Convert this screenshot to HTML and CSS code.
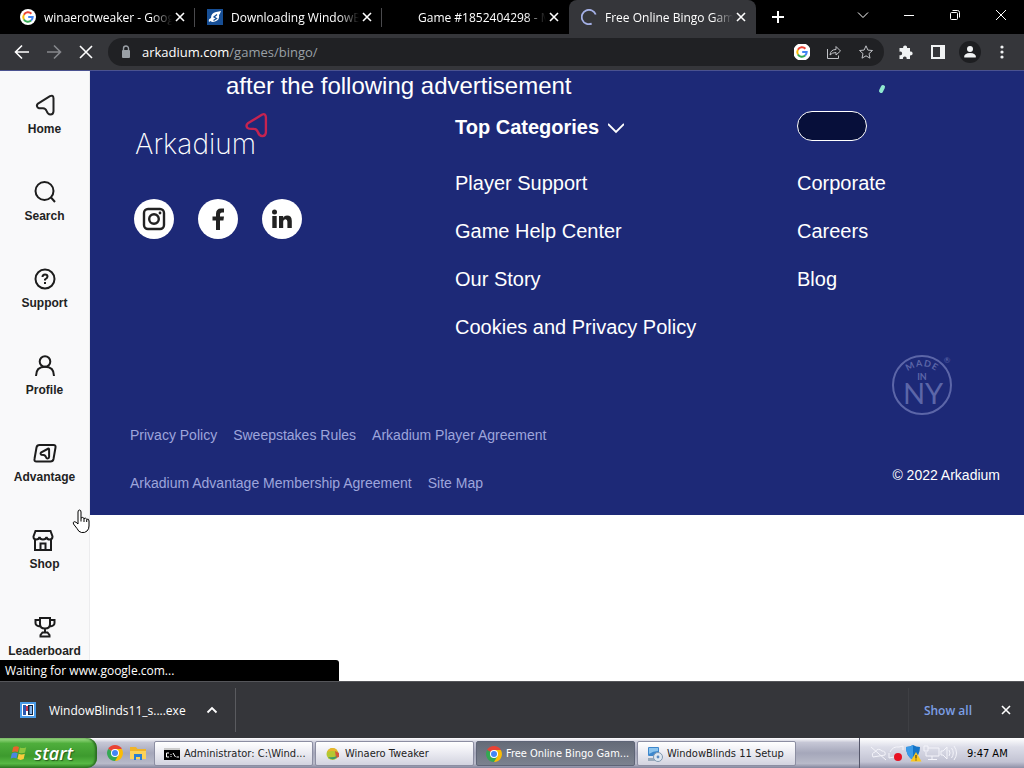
FILE: index.html
```html
<!DOCTYPE html>
<html lang="en">
<head>
    <meta charset="UTF-8">
    <meta name="viewport" content="width=device-width, initial-scale=1.0">
    <title>Free Online Bingo Game</title>
    <link rel="stylesheet" href="styles.css">
</head>
<body>
    <!-- Shared icons -->
    <svg class="sprite" width="0" height="0" aria-hidden="true">
        <symbol id="close" viewBox="0 0 16 16">
            <path d="M4 4l8 8M12 4l-8 8" fill="none" stroke="currentColor" stroke-width="1.6"/>
        </symbol>
        <symbol id="google" viewBox="0 0 16 16">
            <circle cx="8" cy="8" r="8" fill="#fff"/>
            <g fill="none" stroke-width="2">
                <path d="M11.4 4.7A4.7 4.7 0 0 0 3.9 5.7" stroke="#ea4335"/>
                <path d="M3.9 5.7a4.7 4.7 0 0 0 0 4.7" stroke="#fbbc05"/>
                <path d="M3.9 10.4a4.7 4.7 0 0 0 7.2 1.1" stroke="#34a853"/>
                <path d="M11.1 11.5A4.7 4.7 0 0 0 12.7 8H8.2" stroke="#4285f4"/>
            </g>
        </symbol>
        <symbol id="chrome" viewBox="0 0 16 16">
            <path d="M8 8L1.1 4A8 8 0 0 1 14.9 4z" fill="#ea4335"/>
            <path d="M8 8L14.9 4A8 8 0 0 1 8 16z" fill="#fbbc05"/>
            <path d="M8 8v8A8 8 0 0 1 1.1 4z" fill="#34a853"/>
            <path d="M8 4h6.9l-3.4 6z" fill="#fbbc05"/>
            <path d="M11.5 10L8 16 4.5 10z" fill="#34a853"/>
            <circle cx="8" cy="8" r="4" fill="#fff"/>
            <circle cx="8" cy="8" r="3" fill="#4285f4"/>
        </symbol>
        <symbol id="arrow-mark" viewBox="0 0 24 24">
            <path d="M17 3.2L5 10.6Q3 12.4 4.6 14.4Q6 15.6 10 15.3Q12.6 15.4 13.6 18Q14.8 21.4 17.4 21.6Q20.4 21.4 20.5 18.2V5.4Q20.3 1.6 17 3.2z" fill="none" stroke="currentColor" stroke-linejoin="round"/>
        </symbol>
    </svg>

    <header class="browser">
        <div class="tab-strip">
            <div class="tab">
                <svg class="favicon"><use href="#google"/></svg>
                <span class="tab-title">winaerotweaker - Goog</span>
                <button class="tab-close" aria-label="Close tab"><svg><use href="#close"/></svg></button>
            </div>
            <div class="tab">
                <svg class="favicon" viewBox="0 0 16 16">
                    <rect width="16" height="16" fill="#174f96"/>
                    <path d="M2 13q-1-3 2-4 0-5 5-6 3-.6 5-1-1 3-2 4 1 5-4 6.5-3 1-4.5-.5z" fill="#fff"/>
                    <path d="M6.5 11.5l3-2L7 8l3-2.5" fill="none" stroke="#174f96" stroke-width="1.3"/>
                </svg>
                <span class="tab-title">Downloading WindowB</span>
                <button class="tab-close" aria-label="Close tab"><svg><use href="#close"/></svg></button>
            </div>
            <div class="tab">
                <span class="favicon"></span>
                <span class="tab-title">Game #1852404298 - M</span>
                <button class="tab-close" aria-label="Close tab"><svg><use href="#close"/></svg></button>
            </div>
            <div class="tab active">
                <svg class="favicon" viewBox="0 0 16 16">
                    <path d="M14.7 5.5A7.2 7.2 0 1 0 10.7 14.7" fill="none" stroke="#a4b0e6" stroke-width="1.8"/>
                </svg>
                <span class="tab-title">Free Online Bingo Gam</span>
                <button class="tab-close" aria-label="Close tab"><svg><use href="#close"/></svg></button>
            </div>
            <button class="new-tab" aria-label="New tab">
                <svg viewBox="0 0 16 16"><path d="M8 2v12M2 8h12" stroke="currentColor" stroke-width="2"/></svg>
            </button>
            <div class="window-controls">
                <button aria-label="Search tabs"><svg viewBox="0 0 16 16"><path d="M3 5.5l5 5 5-5"/></svg></button>
                <button aria-label="Minimize"><svg viewBox="0 0 16 16"><path d="M3 8.5h10"/></svg></button>
                <button aria-label="Restore"><svg viewBox="0 0 16 16"><rect x="3.5" y="5.5" width="7" height="7" rx="1"/><path d="M5.5 3.500h5q2 0 2 2v5"/></svg></button>
                <button aria-label="Close window"><svg viewBox="0 0 16 16"><path d="M3 3l10 10M13 3L3 13"/></svg></button>
            </div>
        </div>

        <div class="toolbar">
            <button class="tool" aria-label="Back"><svg viewBox="0 0 16 16"><path d="M15 8H2M8 1.5L1.5 8 8 14.5"/></svg></button>
            <button class="tool dim" aria-label="Forward"><svg viewBox="0 0 16 16"><path d="M1 8h13M8 1.5L14.5 8 8 14.5"/></svg></button>
            <button class="tool" aria-label="Stop"><svg viewBox="0 0 16 16"><path d="M2 2l12 12M14 2L2 14"/></svg></button>
            <div class="omnibox">
                <svg class="lock" viewBox="0 0 16 16">
                    <rect x="4" y="6" width="8" height="8" rx="1" fill="#9aa0a6"/>
                    <path d="M5.5 6.5v-2a2.5 2.5 0 0 1 5 0v2" fill="none" stroke="#9aa0a6" stroke-width="1.4"/>
                </svg>
                <span class="url">arkadium.com<span>/games/bingo/</span></span>
                <button class="tool" aria-label="Search with Google"><svg><use href="#google"/></svg></button>
                <button class="tool thin" aria-label="Share"><svg viewBox="0 0 16 16"><path d="M1.5 5v9.5h11v-3M4 11q.5-5.5 6-5.5V2.5L14.5 7 10 11V8.5Q6 8.5 4 11z"/></svg></button>
                <button class="tool thin" aria-label="Bookmark"><svg viewBox="0 0 16 16"><path d="M8 1.8l1.9 4.3 4.6.4-3.5 3.1 1 4.6L8 11.8l-4 2.4 1-4.6L1.5 6.5l4.6-.4z"/></svg></button>
            </div>
            <button class="tool solid" aria-label="Extensions"><svg viewBox="0 0 16 16"><path d="M1.5 4h3.700a2 2 0 1 1 3.800 0H12v3.500a2 2 0 1 1 0 3.800V15H8.600a1.900 1.900 0 1 0-3.600 0H1.500v-3.800a1.900 1.900 0 1 0 0-3.500z"/></svg></button>
            <button class="tool solid" aria-label="Side panel"><svg viewBox="0 0 16 16"><path d="M1 1h14v14H1zM3 3v10h7V3z" fill-rule="evenodd"/></svg></button>
            <button class="tool solid avatar" aria-label="Profile"><svg viewBox="0 0 16 16"><circle cx="8" cy="5" r="3"/><path d="M2 13.500q0-4.500 6-4.500t6 4.500z"/></svg></button>
            <button class="tool solid" aria-label="Menu"><svg viewBox="0 0 16 16"><circle cx="8" cy="3" r="1.6"/><circle cx="8" cy="8" r="1.6"/><circle cx="8" cy="13" r="1.6"/></svg></button>
        </div>
    </header>

    <div class="page">
        <nav class="sidebar">
            <a href="#"><svg viewBox="0 0 24 24"><use href="#arrow-mark"/></svg>Home</a>
            <a href="#"><svg viewBox="0 0 24 24"><circle cx="11.5" cy="11" r="9"/><path d="M18 17.5l4 4.5"/></svg>Search</a>
            <a href="#"><svg viewBox="0 0 24 24"><circle cx="12" cy="12" r="9.500"/><path d="M9.500 10q0-2.500 2.500-2.500t2.500 2.200q0 1.300-2.500 2.800v1M12 15v2"/></svg>Support</a>
            <a href="#"><svg viewBox="0 0 24 24"><circle cx="12" cy="7.5" r="5.3"/><path d="M3 22q0-9.200 9-9.200T21 22"/></svg>Profile</a>
            <a href="#"><svg viewBox="0 0 24 24"><path d="M6.500 4h14q2.500 0 2 2.500l-2 11.500q-.5 2.500-3 2.500h-14Q1 20.500 1.500 18l2-11.500Q4 4 6.500 4zM15.500 7.500L8.300 11.300q-1.500 1.200 0 2.400 3.700.1 4.300 1.600.8 2.200 2 2.200 1.400-.2 1.500-1.500V8.500q0-1-.6-1z"/></svg>Advantage</a>
            <a href="#"><svg viewBox="0 0 24 24"><path d="M2.500 3h15l2 5.500q0 3-2.800 3T13.500 9q-.5 2.500-3.500 2.500T6.500 9q-.5 2.500-3.300 2.500T.5 8.500zM2 11.500V22h16V11.500M7.500 22v-6.500h5V22"/></svg>Shop</a>
            <a href="#"><svg viewBox="0 0 24 24"><path d="M7 3h10v6q0 4.500-5 4.500T7 9zM7 5H2.500v3q0 3 5 3.500M17 5h4.500v3q0 3-5 3.500M12 13.500v4M9.500 17.500h5l2 2.500v1.500h-9V20z"/></svg>Leaderboard</a>
        </nav>

        <main class="content">
            <footer class="site-footer">
                <p class="ad-notice">after the following advertisement</p>
                <div class="footer-columns">
                    <div class="brand">
                        <a class="logo" href="#">Arkadium<svg class="logo-mark"><use href="#arrow-mark"/></svg></a>
                        <div class="social">
                            <a href="#" aria-label="Instagram"><svg viewBox="0 0 24 24"><rect x="2" y="2" width="20" height="20" rx="4" fill="none" stroke="#222" stroke-width="2.4"/><circle cx="12" cy="12" r="4.8" fill="none" stroke="#222" stroke-width="2.4"/><circle cx="18" cy="6" r="1.4"/></svg></a>
                            <a href="#" aria-label="Facebook"><svg viewBox="0 0 24 24"><path d="M10 23V13.500H6.500v-4H10V7q0-5.500 5-5.500h3v4h-2q-2 0-2 2v2h4l-.6 4H14V23z"/></svg></a>
                            <a href="#" aria-label="LinkedIn"><svg viewBox="0 0 24 24"><circle cx="4.5" cy="5" r="2.5"/><path d="M2.300 9h4.400v12H2.300zM9 9h4.200v1.700Q14.400 8.600 17 8.600q4.800 0 4.800 5.400v7h-4.400v-6.300q0-2.500-2-2.500-2.200 0-2.200 2.500V21H9z"/></svg></a>
                        </div>
                    </div>
                    <div class="link-column">
                        <h2>Top Categories <svg viewBox="0 0 16 16"><path d="M0 5l8 8 8-8" fill="none" stroke="currentColor" stroke-width="1.8"/></svg></h2>
                        <a href="#">Player Support</a>
                        <a href="#">Game Help Center</a>
                        <a href="#">Our Story</a>
                        <a href="#">Cookies and Privacy Policy</a>
                    </div>
                    <div class="link-column">
                        <div class="pill-row"><button class="pill" aria-label="Language"></button></div>
                        <a href="#">Corporate</a>
                        <a href="#">Careers</a>
                        <a href="#">Blog</a>
                    </div>
                </div>
                <div class="footer-bottom">
                    <div class="legal">
                        <a href="#">Privacy Policy</a>
                        <a href="#">Sweepstakes Rules</a>
                        <a href="#">Arkadium Player Agreement</a>
                        <a href="#">Arkadium Advantage Membership Agreement</a>
                        <a href="#">Site Map</a>
                    </div>
                    <div class="copyright">
                        <svg class="badge" viewBox="2 0 64 64">
                            <circle cx="32" cy="34" r="29" fill="none" stroke="currentColor" stroke-width="2"/>
                            <path id="made-arc" d="M12 27a23 23 0 0 1 40 0" fill="none"/>
                            <text class="made"><textPath href="#made-arc" startOffset="50%">MADE</textPath></text>
                            <text class="in" x="32" y="29">IN</text>
                            <text class="ny" x="33" y="53">NY</text>
                            <text class="reg" x="57" y="12">®</text>
                        </svg>
                        <span>© 2022 Arkadium</span>
                    </div>
                </div>
                <svg class="spark" viewBox="0 0 8 10"><path d="M3 7l2-4" stroke="#8fe8d0" stroke-width="4" stroke-linecap="round"/></svg>
            </footer>
        </main>

        <svg class="cursor" viewBox="0 0 18 25">
            <path d="M6 15V3q0-2 1.500-2T9 3v6q2-1.500 3 .5 1.800-1 2.700.7 2.300-.7 2.300 1.800v5q0 3-2 5-2 2-5.500 1.500-3-.5-4.500-4L1.500 15q-.8-2 .7-2.300Q4 12.600 6 15zM9 9v3.500M12 9.500V13M14.700 10.500V13" fill="#fff" stroke="#000"/>
        </svg>
        <div class="status">Waiting for www.google.com...</div>
    </div>

    <div class="downloads">
        <button class="download-item">
            <svg class="file-icon" viewBox="0 0 16 16">
                <rect width="16" height="16" fill="#4a9be8"/>
                <rect x="2" y="2" width="12" height="12" fill="#fff"/>
                <path d="M3 3h3v10H3z" fill="#2c58b0"/>
                <path d="M6 4h2v5H6z" fill="#c8344c"/>
                <path d="M8 3h5v10H8z" fill="#10233f"/>
                <path d="M9.500 4h2.500v8H9.500z" fill="#7fb2ec"/>
            </svg>
            <span>WindowBlinds11_s....exe</span>
            <svg class="caret" viewBox="0 0 16 16"><path d="M3.500 10.500L8 6l4.500 4.500" fill="none" stroke="currentColor" stroke-width="1.800"/></svg>
        </button>
        <button class="show-all">Show all</button>
        <button class="close-bar" aria-label="Close downloads bar"><svg><use href="#close"/></svg></button>
    </div>

    <div class="taskbar">
        <button class="start">
            <svg viewBox="0 0 20 20">
                <path d="M3.500 3.500q3-2 6.500-.3L8.800 9q-3.300-1.500-6.500.2z" fill="#e8642c"/>
                <path d="M11 3.800q3.300 1.500 7-.3l-1.300 6q-3.500 1.700-6.900.1z" fill="#8cc63e"/>
                <path d="M2 10.500q3.200-1.800 6.500-.2L7.200 16q-3.300-1.500-6.500.3z" fill="#4a86e0"/>
                <path d="M9.600 10.900q3.300 1.500 6.900-.1l-1.300 6q-3.500 1.700-6.900 0z" fill="#f8cc3c"/>
            </svg>
            start
        </button>
        <div class="quick-launch">
            <svg viewBox="0 0 16 16"><use href="#chrome"/></svg>
            <svg viewBox="0 0 16 16"><path d="M0 2h6l1.500 2H16v10H0z" fill="#f0b429"/><path d="M0 6h16v8H0z" fill="#fbd35a"/><path d="M4 9h8v6h-2v-3H6v3H4z" fill="#2a7fd4"/></svg>
        </div>
        <div class="tasks">
            <button class="task">
                <svg viewBox="0 0 16 16"><rect y="2" width="16" height="12" fill="#000"/><rect y="2" width="16" height="2" fill="#ccc"/><path d="M5 7H2.500v4H5M7 8v1M7 10v1M9 7l2.500 4M12.500 11H15" fill="none" stroke="#fff"/></svg>
                <span>Administrator: C:\Wind...</span>
            </button>
            <button class="task">
                <svg viewBox="0 0 16 16"><circle cx="7.500" cy="8" r="6" fill="#b5c832"/><path d="M2 6q3-6 9-3l2 3q-6-2-11 0z" fill="#e9b52c"/><path d="M10 5l4 2v4l-3 1z" fill="#d4583c"/><path d="M3 11q4 4 8 1l1-2q-4 2-9 1z" fill="#3c9c6c"/></svg>
                <span>Winaero Tweaker</span>
            </button>
            <button class="task pressed">
                <svg viewBox="0 0 16 16"><use href="#chrome"/></svg>
                <span>Free Online Bingo Gam...</span>
            </button>
            <button class="task">
                <svg viewBox="0 0 16 16"><rect x="1" y="1" width="11" height="9" rx="1" fill="#3d87cc"/><path d="M2 2h9v3q-5 0-9 3z" fill="#8cc4ee"/><path d="M1 12h7v3H1z" fill="#9ab"/><circle cx="11" cy="11" r="4.500" fill="#dfe8f2" stroke="#8098b0"/><circle cx="11" cy="11" r="1.400" fill="#5a8ac0"/></svg>
                <span>WindowBlinds 11 Setup</span>
            </button>
        </div>
        <div class="tray">
            <svg class="tray-icons" viewBox="0 0 90 20">
                <g fill="none" stroke="#f4f4fa">
                    <path d="M3 14q-2-4 2-5 3-5 7-1 4 0 3 4zM1 4l15 13"/>
                    <path d="M20 9q3-6 9-5l4-1v4M19 10v5l5-1"/>
                    <path d="M58 5h11v8H56V9M62 13v3M58 16.500h9M54 3h4v5h-4z"/>
                    <path d="M71 8h2l4-4v12l-4-4h-2zM79 7q2 3 0 6M81.500 5q3.500 5 0 10M84 3q5 7 0 14"/>
                </g>
                <circle cx="28" cy="14" r="4" fill="#e81123"/>
                <path d="M43 2q3 2 7 2 0 9-7 13-7-4-7-13 4 0 7-2z" fill="#1474c8"/>
                <path d="M43 2v15q-7-4-7-13 4 0 7-2z" fill="#3c9be8"/>
                <path d="M46 9l5.500 9.500h-11z" fill="#fcc81c"/>
                <path d="M46 12v3.500M46 16.500v1" stroke="#222"/>
            </svg>
            <span>9:47 AM</span>
        </div>
    </div>
</body>
</html>
```

FILE: styles.css
```css
* {
    box-sizing: border-box;
}

body {
    margin: 0;
    height: 100vh;
    display: flex;
    flex-direction: column;
    overflow: hidden;
    font-family: "Open Sans", "Noto Sans", sans-serif;
    font-size: 12px;
    background: #fff;
}

button {
    margin: 0;
    padding: 0;
    border: none;
    background: none;
    color: inherit;
    font: inherit;
    cursor: pointer;
}

a {
    color: inherit;
    text-decoration: none;
}

svg {
    display: block;
    flex: none;
    width: 16px;
    height: 16px;
}

.sprite {
    position: absolute;
    width: 0;
    height: 0;
}

/* Tabs */
.browser {
    flex: none;
    color: #fff;
    background: #35363a;
    border-bottom: 1px solid #4b5290;
}

.tab-strip {
    display: flex;
    height: 34px;
    padding-left: 8px;
    background: #000;
}

.tab {
    position: relative;
    display: flex;
    align-items: center;
    flex: 0 1 187px;
    min-width: 0;
    padding: 0 7px 0 12px;
}

.tab:nth-child(-n+2)::after {
    content: "";
    position: absolute;
    right: 0;
    top: 8px;
    width: 1px;
    height: 19px;
    background: #4a4a4d;
}

.tab.active {
    background: #35363a;
    border-radius: 8px 8px 0 0;
}

.favicon {
    flex: none;
    width: 16px;
    height: 16px;
    margin-right: 8px;
}

.tab-title {
    flex: 1;
    min-width: 0;
    overflow: hidden;
    white-space: nowrap;
    -webkit-mask-image: linear-gradient(to right, #000 84%, transparent);
    mask-image: linear-gradient(to right, #000 84%, transparent);
}

.new-tab {
    width: 44px;
    display: flex;
    align-items: center;
    justify-content: center;
}

.window-controls {
    display: flex;
    height: 30px;
    margin-left: auto;
}

.window-controls button {
    width: 46px;
    display: flex;
    align-items: center;
    justify-content: center;
}

.window-controls svg {
    fill: none;
    stroke: #fff;
}

/* Toolbar */
.toolbar {
    display: flex;
    align-items: center;
    height: 36px;
    padding: 0 6px;
}

.tool {
    display: flex;
    align-items: center;
    justify-content: center;
    flex: none;
    width: 32px;
    height: 28px;
}

.tool svg {
    fill: none;
    stroke: #fff;
    stroke-width: 1.6;
}

.tool.dim svg {
    stroke: #86888c;
}

.tool.thin svg {
    stroke: #c0c2c6;
    stroke-width: 1;
}

.tool.solid svg {
    fill: #f1f3f4;
    stroke: none;
}

.tool.avatar svg {
    width: 22px;
    height: 22px;
    padding: 3px;
    border-radius: 50%;
    background: #1d1e21;
}

.omnibox {
    display: flex;
    align-items: center;
    flex: 1;
    height: 28px;
    margin: 0 6px;
    padding: 0 2px 0 10px;
    border-radius: 14px;
    background: #202124;
}

.lock {
    margin-right: 8px;
}

.url {
    flex: 1;
    font-size: 13px;
}

.url span {
    color: #9aa0a6;
}

/* Page */
.page {
    position: relative;
    display: flex;
    flex: 1;
    min-height: 0;
    font-family: "Liberation Sans", Arial, sans-serif;
}

.sidebar {
    flex: none;
    width: 90px;
    overflow: hidden;
    background: #f9f9fa;
    border-right: 1px solid #ececee;
}

.sidebar a {
    display: flex;
    flex-direction: column;
    align-items: center;
    gap: 4px;
    height: 87px;
    padding-top: 22px;
    color: #222;
    font-weight: bold;
    line-height: 16px;
}

.sidebar svg {
    width: 24px;
    height: 24px;
    overflow: visible;
    fill: none;
    stroke: #1c1c1c;
    stroke-width: 2;
}

.content {
    flex: 1;
    min-width: 0;
}

.site-footer {
    position: relative;
    padding: 0 0 8px 40px;
    color: #fff;
    background: #1d2977;
}

.ad-notice {
    margin: 0 0 2px;
    padding-left: 96px;
    font-size: 24px;
    line-height: 30px;
}

.footer-columns {
    display: grid;
    grid-template-columns: 325fr 342fr 227fr;
}

.logo {
    display: flex;
    height: 56px;
    padding: 24px 0 0 5px;
    font-family: Inter, sans-serif;
    font-size: 28px;
    font-weight: 200;
    line-height: 34px;
}

.logo-mark {
    width: 28px;
    height: 28px;
    margin: -16px 0 0 -14px;
    color: #c62350;
    stroke-width: 2;
}

.social {
    display: flex;
    gap: 24px;
    padding: 40px 0 0 4px;
}

.social a {
    display: flex;
    align-items: center;
    justify-content: center;
    width: 40px;
    height: 40px;
    border-radius: 50%;
    background: #fff;
}

.social svg {
    width: 24px;
    height: 24px;
    fill: #222;
}

.link-column {
    display: flex;
    flex-direction: column;
    align-items: flex-start;
    font-size: 20px;
    line-height: 48px;
}

.link-column h2 {
    display: flex;
    align-items: center;
    gap: 9px;
    margin: 0 0 8px;
    font-size: 20px;
    line-height: 48px;
}

.pill-row {
    height: 56px;
    padding-top: 8px;
}

.pill {
    display: block;
    width: 70px;
    height: 30px;
    border: 1px solid #fff;
    border-radius: 15px;
    background: #070f3a;
}

.footer-bottom {
    display: flex;
    justify-content: space-between;
    padding-right: 24px;
    font-size: 14px;
}

.legal {
    display: flex;
    flex-wrap: wrap;
    column-gap: 16px;
    max-width: 480px;
    padding-top: 60px;
    line-height: 48px;
    color: #9da5dc;
}

.copyright {
    display: flex;
    flex-direction: column;
    gap: 52px;
    line-height: 16px;
}

.badge {
    width: 64px;
    height: 64px;
    color: #5c66a8;
}

.badge text {
    fill: currentColor;
    font-family: Lato, sans-serif;
    text-anchor: middle;
}

.badge .made,
.badge .in {
    font-size: 9px;
    font-weight: bold;
}

.badge .made {
    letter-spacing: 1px;
}

.badge .ny {
    font-size: 29px;
}

.badge .reg {
    font-size: 8px;
}

.spark {
    position: absolute;
    top: 13px;
    right: 138px;
    width: 8px;
    height: 10px;
}

.cursor {
    position: absolute;
    left: 72px;
    top: 438px;
    width: 18px;
    height: 25px;
}

.status {
    position: absolute;
    left: 0;
    bottom: 0;
    width: 339px;
    padding-left: 5px;
    border-radius: 0 3px 0 0;
    color: #fff;
    background: #000;
    font-family: "Open Sans", "Noto Sans", sans-serif;
    line-height: 21px;
}

/* Downloads bar */
.downloads {
    display: flex;
    align-items: center;
    flex: none;
    height: 57px;
    color: #fff;
    background: #35363a;
    border-top: 1px solid #55565a;
}

.download-item {
    display: flex;
    align-items: center;
    height: 44px;
    padding: 0 15px 0 20px;
    border-right: 1px solid #5a5b5f;
}

.file-icon {
    margin-right: 13px;
}

.caret {
    margin-left: 18px;
}

.show-all {
    margin-left: auto;
    height: 44px;
    padding: 0 26px 0 15px;
    border-left: 1px solid #3e3f43;
    color: #7c9fe6;
    font-weight: 600;
}

.close-bar {
    margin-right: 10px;
}

/* Taskbar */
.taskbar {
    display: flex;
    flex: none;
    height: 30px;
    font-family: "DejaVu Sans Condensed", "DejaVu Sans", sans-serif;
    font-size: 11px;
    color: #222;
    background: linear-gradient(#fff, #c6c7d6 15%, #a5a7ba 50%, #b8bac9 85%, #83859c);
}

.start {
    display: flex;
    align-items: center;
    gap: 6px;
    width: 97px;
    padding-left: 10px;
    border-radius: 0 10px 10px 0;
    color: #fff;
    background: linear-gradient(#a6e08e, #4fae3c 18%, #3d9a2e 60%, #56b843 85%, #2d7a22);
    box-shadow: inset -2px 0 2px #2c6e22;
    font-family: "Open Sans", sans-serif;
    font-size: 18px;
    font-style: italic;
    font-weight: 600;
    text-shadow: 1px 1px 1px #245c1b;
}

.start svg {
    width: 18px;
    height: 18px;
}

.quick-launch {
    display: flex;
    align-items: center;
    gap: 7px;
    width: 57px;
    padding-left: 10px;
}

.tasks {
    display: flex;
    flex: 1;
    gap: 2px;
    min-width: 0;
    padding: 3px 0 2px;
}

.task {
    display: flex;
    align-items: center;
    gap: 4px;
    flex: 0 1 159px;
    min-width: 0;
    padding-left: 9px;
    border: 1px solid #8c8ea2;
    border-radius: 2px;
    background: linear-gradient(#fff, #eeeef4 40%, #d2d3df);
    white-space: nowrap;
}

.task.pressed {
    color: #fff;
    border-color: #5f6577;
    background: linear-gradient(#656b78, #7c828f);
}

.tray {
    display: flex;
    align-items: center;
    gap: 7px;
    width: 165px;
    padding-left: 10px;
    border-left: 1px solid #55576a;
    background: linear-gradient(#fff, #dcdde8 30%, #c2c3d3 80%, #8e90a6);
    color: #000;
}

.tray-icons {
    width: 90px;
    height: 20px;
}
```
